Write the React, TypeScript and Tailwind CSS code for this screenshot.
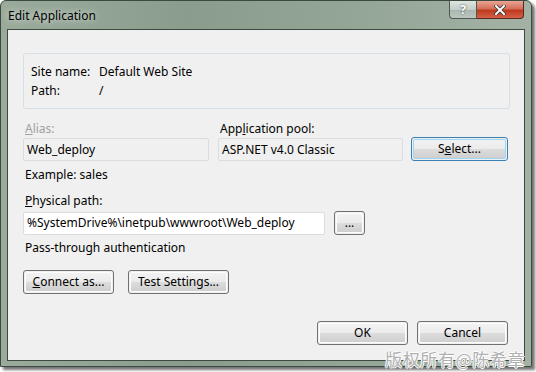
import React from 'react';

const font = { fontFamily: '"Noto Sans", "Open Sans", sans-serif' };

function Button({ children, w, focus }: { children: React.ReactNode; w: string; focus?: boolean }) {
  return (
    <div
      className={`${w} h-[24px] shrink-0 rounded-[3px] border p-px ${
        focus ? 'border-[#3c7fb1]' : 'border-[#707070]'
      }`}
    >
      <div
        className={`flex h-full w-full items-center justify-center rounded-[2px] border text-[12px] text-black ${
          focus
            ? 'border-[#9fd5f5] bg-[linear-gradient(#f2f2f2_0%,#ebebeb_49%,#dddddd_50%,#cfcfcf_100%)]'
            : 'border-[#fcfcfc] bg-[linear-gradient(#f2f2f2_0%,#ebebeb_49%,#dddddd_50%,#cfcfcf_100%)]'
        }`}
      >
        {children}
      </div>
    </div>
  );
}

function TextBox({ value, w, readOnly }: { value: string; w: string; readOnly?: boolean }) {
  return (
    <div
      className={`${w} flex h-[23px] shrink-0 items-center rounded-[2px] border border-[#d9dde2] px-[3px] text-[12px] text-black ${
        readOnly ? 'bg-[#f0f0f0]' : 'bg-white'
      }`}
    >
      {value}
    </div>
  );
}

export default function App() {
  return (
    <div className="h-[372px] w-[536px] bg-white" style={font}>
      <div className="relative flex h-[367px] w-[532px] flex-col rounded-t-[6px] border border-[#3b4a40] bg-[linear-gradient(90deg,#9aab9c_0%,#8a9d8d_35%,#93a595_65%,#a3b2a5_100%)] shadow-[3px_3px_3px_rgba(0,0,0,0.55)]">
        {/* title bar */}
        <div className="flex h-[28px] items-start justify-between">
          <div className="pl-[7px] pt-[6px] text-[12px] text-black [text-shadow:0_0_6px_rgba(255,255,255,0.9)]">
            Edit Application
          </div>
          <div className="mr-[7px] flex">
            <div className="flex h-[18px] w-[28px] items-center justify-center rounded-bl-[4px] border border-t-0 border-[#4d5a52] bg-[linear-gradient(#dfe6e2_0%,#c3cdc7_50%,#a9b5ad_51%,#bcc7c0_100%)] text-[12px] font-bold text-white [text-shadow:0_0_2px_#333]">
              ?
            </div>
            <div className="flex h-[18px] w-[47px] items-center justify-center rounded-br-[4px] border border-l-0 border-t-0 border-[#5a2a20] bg-[linear-gradient(#e8a594_0%,#d4705b_45%,#c0391c_55%,#d4604a_100%)]">
              <svg width="12" height="10" viewBox="0 0 12 10">
                <path d="M2 1 L10 9 M10 1 L2 9" stroke="#333" strokeWidth="3.6" strokeLinecap="square" />
                <path d="M2 1 L10 9 M10 1 L2 9" stroke="#fff" strokeWidth="2" strokeLinecap="square" />
              </svg>
            </div>
          </div>
        </div>

        {/* client area */}
        <div className="mx-[6px] mb-[5px] flex-1 border border-[#3c4a40] bg-[#f0f0f0] pl-[15px] pr-[14px] pt-[23px] text-[12px] text-black">
          <div className="flex h-[56px] flex-col justify-center rounded-[3px] border border-[#d5dfe5] pl-[7px]">
            <div className="flex h-[19px] items-center">
              <span className="w-[68px]">Site name:</span>
              <span>Default Web Site</span>
            </div>
            <div className="flex h-[19px] items-center">
              <span className="w-[68px]">Path:</span>
              <span>/</span>
            </div>
          </div>

          <div className="mt-[11px] flex">
            <div className="flex w-[195px] flex-col">
              <div className="h-[18px] pl-[2px] text-[#a0a0a0]">
                <u>A</u>lias:
              </div>
              <TextBox value="Web_deploy" w="w-[186px]" readOnly />
            </div>
            <div className="flex w-[193px] flex-col">
              <div className="h-[18px] pl-[2px]">
                App<u>l</u>ication pool:
              </div>
              <TextBox value="ASP.NET v4.0 Classic" w="w-[185px]" readOnly />
            </div>
            <div className="flex flex-col">
              <div className="h-[17px]" />
              <Button w="w-[97px]" focus>
                S<u>e</u>lect...
              </Button>
            </div>
          </div>

          <div className="mt-[5px] h-[19px] pl-[2px]">Example: sales</div>

          <div className="mt-[7px] h-[19px] pl-[2px]">
            <u>P</u>hysical path:
          </div>
          <div className="flex items-center gap-[9px]">
            <TextBox value="%SystemDrive%\inetpub\wwwroot\Web_deploy" w="w-[302px]" />
            <Button w="w-[31px]">...</Button>
          </div>

          <div className="mt-[4px] h-[19px] pl-[2px]">Pass-through authentication</div>

          <div className="mt-[12px] flex gap-[14px]">
            <Button w="w-[91px]">
              <u>C</u>onnect as...
            </Button>
            <Button w="w-[101px]">Test Settings...</Button>
          </div>

          <div className="mt-[27px] flex justify-end gap-[9px] pr-[2px]">
            <Button w="w-[91px]">OK</Button>
            <Button w="w-[91px]">Cancel</Button>
          </div>
        </div>

        <div
          className="pointer-events-none absolute bottom-[-5px] right-[6px] text-[17px] tracking-[0.6px] text-[#b0b0b0] [text-shadow:1px_0_0_#fff,-1px_0_0_#fff,0_1px_0_#fff,0_-1px_0_#fff]"
          style={{ fontFamily: '"Noto Sans CJK SC", sans-serif' }}
        >
          版权所有@陈希章
        </div>
      </div>
    </div>
  );
}
